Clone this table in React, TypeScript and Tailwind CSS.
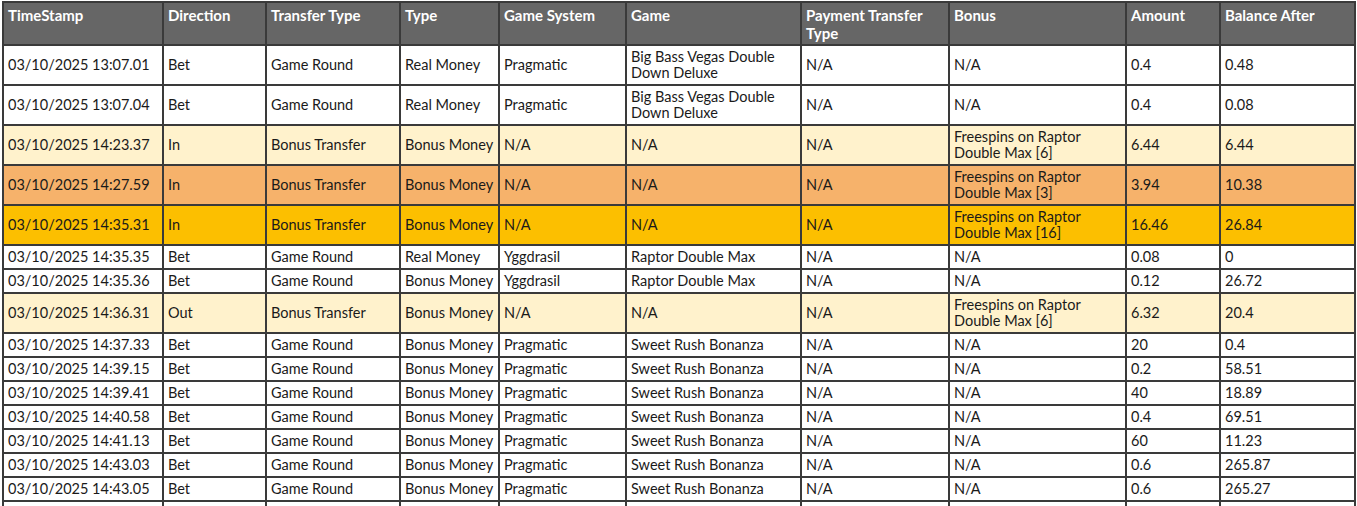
type Row = {
  ts: string;
  dir: string;
  transfer: string;
  type: string;
  system: string;
  game: string;
  payment: string;
  bonus: string;
  amount: string;
  balance: string;
  tone?: "cream" | "orange" | "gold";
};

const rows: Row[] = [
  { ts: "03/10/2025 13:07.01", dir: "Bet", transfer: "Game Round", type: "Real Money", system: "Pragmatic", game: "Big Bass Vegas Double Down Deluxe", payment: "N/A", bonus: "N/A", amount: "0.4", balance: "0.48" },
  { ts: "03/10/2025 13:07.04", dir: "Bet", transfer: "Game Round", type: "Real Money", system: "Pragmatic", game: "Big Bass Vegas Double Down Deluxe", payment: "N/A", bonus: "N/A", amount: "0.4", balance: "0.08" },
  { ts: "03/10/2025 14:23.37", dir: "In", transfer: "Bonus Transfer", type: "Bonus Money", system: "N/A", game: "N/A", payment: "N/A", bonus: "Freespins on Raptor Double Max [6]", amount: "6.44", balance: "6.44", tone: "cream" },
  { ts: "03/10/2025 14:27.59", dir: "In", transfer: "Bonus Transfer", type: "Bonus Money", system: "N/A", game: "N/A", payment: "N/A", bonus: "Freespins on Raptor Double Max [3]", amount: "3.94", balance: "10.38", tone: "orange" },
  { ts: "03/10/2025 14:35.31", dir: "In", transfer: "Bonus Transfer", type: "Bonus Money", system: "N/A", game: "N/A", payment: "N/A", bonus: "Freespins on Raptor Double Max [16]", amount: "16.46", balance: "26.84", tone: "gold" },
  { ts: "03/10/2025 14:35.35", dir: "Bet", transfer: "Game Round", type: "Real Money", system: "Yggdrasil", game: "Raptor Double Max", payment: "N/A", bonus: "N/A", amount: "0.08", balance: "0" },
  { ts: "03/10/2025 14:35.36", dir: "Bet", transfer: "Game Round", type: "Bonus Money", system: "Yggdrasil", game: "Raptor Double Max", payment: "N/A", bonus: "N/A", amount: "0.12", balance: "26.72" },
  { ts: "03/10/2025 14:36.31", dir: "Out", transfer: "Bonus Transfer", type: "Bonus Money", system: "N/A", game: "N/A", payment: "N/A", bonus: "Freespins on Raptor Double Max [6]", amount: "6.32", balance: "20.4", tone: "cream" },
  { ts: "03/10/2025 14:37.33", dir: "Bet", transfer: "Game Round", type: "Bonus Money", system: "Pragmatic", game: "Sweet Rush Bonanza", payment: "N/A", bonus: "N/A", amount: "20", balance: "0.4" },
  { ts: "03/10/2025 14:39.15", dir: "Bet", transfer: "Game Round", type: "Bonus Money", system: "Pragmatic", game: "Sweet Rush Bonanza", payment: "N/A", bonus: "N/A", amount: "0.2", balance: "58.51" },
  { ts: "03/10/2025 14:39.41", dir: "Bet", transfer: "Game Round", type: "Bonus Money", system: "Pragmatic", game: "Sweet Rush Bonanza", payment: "N/A", bonus: "N/A", amount: "40", balance: "18.89" },
  { ts: "03/10/2025 14:40.58", dir: "Bet", transfer: "Game Round", type: "Bonus Money", system: "Pragmatic", game: "Sweet Rush Bonanza", payment: "N/A", bonus: "N/A", amount: "0.4", balance: "69.51" },
  { ts: "03/10/2025 14:41.13", dir: "Bet", transfer: "Game Round", type: "Bonus Money", system: "Pragmatic", game: "Sweet Rush Bonanza", payment: "N/A", bonus: "N/A", amount: "60", balance: "11.23" },
  { ts: "03/10/2025 14:43.03", dir: "Bet", transfer: "Game Round", type: "Bonus Money", system: "Pragmatic", game: "Sweet Rush Bonanza", payment: "N/A", bonus: "N/A", amount: "0.6", balance: "265.87" },
  { ts: "03/10/2025 14:43.05", dir: "Bet", transfer: "Game Round", type: "Bonus Money", system: "Pragmatic", game: "Sweet Rush Bonanza", payment: "N/A", bonus: "N/A", amount: "0.6", balance: "265.27" },
  { ts: "03/10/2025 14:43.07", dir: "Bet", transfer: "Game Round", type: "Bonus Money", system: "Pragmatic", game: "Sweet Rush Bonanza", payment: "N/A", bonus: "N/A", amount: "0.6", balance: "264.67" },
];

const headers = [
  { label: "TimeStamp", w: "w-[160px]" },
  { label: "Direction", w: "w-[103px]" },
  { label: "Transfer Type", w: "w-[134px]" },
  { label: "Type", w: "w-[99px]" },
  { label: "Game System", w: "w-[127px]" },
  { label: "Game", w: "w-[175px]" },
  { label: "Payment Transfer Type", w: "w-[148px]" },
  { label: "Bonus", w: "w-[177px]" },
  { label: "Amount", w: "w-[94px]" },
  { label: "Balance After", w: "w-[135px]" },
];

const toneBg = {
  cream: "bg-[#fff2cc]",
  orange: "bg-[#f6b26b]",
  gold: "bg-[#fcbf00]",
};

export default function App() {
  return (
    <div className="bg-white h-[506px] overflow-hidden pl-[2px] pt-[1px] font-['Lato',sans-serif]">
      <table className="table-fixed border-collapse w-[1354px] text-[14.5px] leading-4 text-[#1a1a1a]">
        <colgroup>
          {headers.map((h) => (
            <col key={h.label} className={h.w} />
          ))}
        </colgroup>
        <thead>
          <tr className="bg-[#666666] h-[43px]">
            {headers.map((h) => (
              <th
                key={h.label}
                className="border-2 border-[#3a3a3a] text-left align-top font-bold text-white text-[15px] leading-[18px] px-1 pt-[3px]"
              >
                {h.label}
              </th>
            ))}
          </tr>
        </thead>
        <tbody>
          {rows.map((r) => {
            const cells = [r.ts, r.dir, r.transfer, r.type, r.system, r.game, r.payment, r.bonus, r.amount, r.balance];
            return (
              <tr key={r.ts} className={r.tone ? toneBg[r.tone] : "bg-white"}>
                {cells.map((c, i) => (
                  <td key={i} className="border-2 border-[#3a3a3a] px-1 py-[3px] align-middle">
                    {c}
                  </td>
                ))}
              </tr>
            );
          })}
        </tbody>
      </table>
    </div>
  );
}
